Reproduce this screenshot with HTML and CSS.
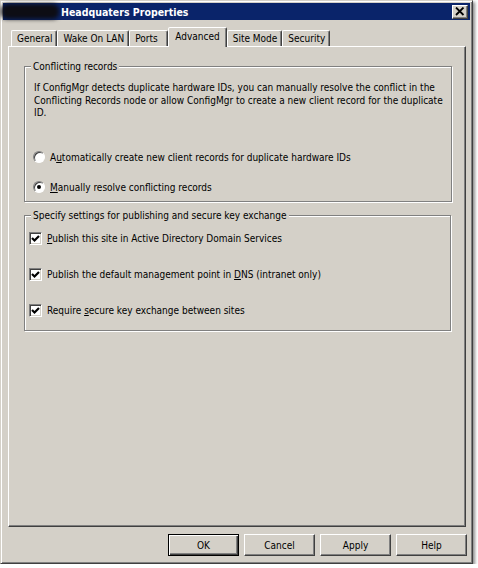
FILE: index.html
```html
<!DOCTYPE html>
<html lang="en">
<head>
    <meta charset="UTF-8">
    <title>Headquaters Properties</title>
    <link rel="stylesheet" href="styles.css">
</head>
<body>

<div class="window">
    <div class="titlebar">
        <span class="title-blur"></span>
        <span class="title">Headquaters Properties</span>
        <button class="close-btn">
            <svg width="10" height="9" viewBox="0 0 10 9">
                <path d="M1 0.5 L8.5 8 M8.5 0.5 L1 8" stroke="#000" stroke-width="1.8"/>
            </svg>
        </button>
    </div>

    <div class="tabs">
        <div class="tab">General</div>
        <div class="tab">Wake On LAN</div>
        <div class="tab">Ports</div>
        <div class="tab active">Advanced</div>
        <div class="tab">Site Mode</div>
        <div class="tab">Security</div>
    </div>

    <div class="panel">
        <fieldset class="group group-conflict">
            <legend>Conflicting records</legend>
            <p class="desc">If ConfigMgr detects duplicate hardware IDs, you can manually resolve the conflict in the<br>Conflicting Records node or allow ConfigMgr to create a new client record for the duplicate<br>ID.</p>

            <div class="option first">
                <span class="radio"></span>
                <span>A<u>u</u>tomatically create new client records for duplicate hardware IDs</span>
            </div>
            <div class="option">
                <span class="radio checked"></span>
                <span><u>M</u>anually resolve conflicting records</span>
            </div>
        </fieldset>

        <fieldset class="group group-publish">
            <legend>Specify settings for publishing and secure key exchange</legend>
            <div class="option check-row first">
                <span class="check"><svg width="9" height="9" viewBox="0 0 9 9"><path d="M1 4 L3.5 6.5 L8 2" stroke="#000" stroke-width="2.2" fill="none"/></svg></span>
                <span><u>P</u>ublish this site in Active Directory Domain Services</span>
            </div>
            <div class="option check-row">
                <span class="check"><svg width="9" height="9" viewBox="0 0 9 9"><path d="M1 4 L3.5 6.5 L8 2" stroke="#000" stroke-width="2.2" fill="none"/></svg></span>
                <span>Publish the default management point in <u>D</u>NS (intranet only)</span>
            </div>
            <div class="option check-row">
                <span class="check"><svg width="9" height="9" viewBox="0 0 9 9"><path d="M1 4 L3.5 6.5 L8 2" stroke="#000" stroke-width="2.2" fill="none"/></svg></span>
                <span>Require <u>s</u>ecure key exchange between sites</span>
            </div>
        </fieldset>
    </div>

    <div class="buttons">
        <button class="btn default">OK</button>
        <button class="btn">Cancel</button>
        <button class="btn">Apply</button>
        <button class="btn">Help</button>
    </div>
</div>

</body>
</html>
```

FILE: styles.css
```css
body {
    margin: 0;
    background-color: #fff;
    font-family: "DejaVu Sans Condensed", "DejaVu Sans", sans-serif;
    font-stretch: condensed;
    font-size: 10px;
    color: #000;
}

.window {
    width: 473px;
    height: 564px;
    box-sizing: border-box;
    background-color: #d4d0c8;
    border: 1px solid;
    border-color: #d4d0c8 #404040 #404040 #d4d0c8;
    box-shadow: inset 1px 1px 0 #fff, inset -1px -1px 0 #808080, 2px 2px 3px rgba(0, 0, 0, 0.45);
    padding: 2px;
    display: flex;
    flex-direction: column;
}

.titlebar {
    height: 17px;
    background-color: #0a246a;
    display: flex;
    align-items: center;
}

.title-blur {
    width: 58px;
    height: 15px;
    margin-left: -2px;
    background-color: #0d0d14;
    border-radius: 6px;
    filter: blur(2px);
}

.title {
    color: #fff;
    font-size: 10.5px;
    font-weight: bold;
    margin-left: 2px;
    flex: 1;
}

.close-btn {
    width: 16px;
    height: 14px;
    margin-right: 2px;
    padding: 0;
    background-color: #d4d0c8;
    border: 1px solid;
    border-color: #fff #404040 #404040 #fff;
    box-shadow: inset -1px -1px 0 #808080;
    display: flex;
    align-items: center;
    justify-content: center;
}

.tabs {
    display: flex;
    align-items: flex-end;
    height: 20px;
    margin: 7px 0 -1px 8px;
    position: relative;
    z-index: 1;
}

.tab {
    min-width: 39px;
    box-sizing: border-box;
    height: 16px;
    line-height: 15px;
    padding: 0 4px 0 5px;
    margin-bottom: 1px;
    border: 1px solid;
    border-bottom: none;
    border-color: #fff #404040 transparent #fff;
    border-radius: 2px 2px 0 0;
    box-shadow: inset -1px 0 0 #808080;
}

.tab.active {
    height: 20px;
    line-height: 17px;
    margin-bottom: 0;
    padding: 0 6px;
    background-color: #d4d0c8;
}

.panel {
    width: 458px;
    height: 481px;
    box-sizing: border-box;
    margin-left: 5px;
    padding: 13px 14px 0 15px;
    border: 1px solid;
    border-color: #fff #404040 #404040 #fff;
    box-shadow: inset -1px -1px 0 #808080;
}

.group {
    margin: 0;
    padding: 0 8px;
    border: 1px solid #808080;
    box-shadow: inset 1px 1px 0 #fff, 1px 1px 0 #fff;
}

.group legend {
    margin-left: -2px;
    padding: 0 2px;
    line-height: 13px;
    background-color: #d4d0c8;
}

.group-conflict {
    padding-bottom: 7px;
}

.group-publish {
    margin-top: 7px;
    padding-bottom: 13px;
}

.desc {
    margin: 9px 0 0 1px;
    line-height: 12.5px;
    white-space: nowrap;
}

.option {
    display: flex;
    align-items: center;
    gap: 5px;
    height: 13px;
    margin-top: 17px;
}

.option.first {
    margin-top: 31px;
}

.check-row {
    margin-top: 23px;
    margin-left: -4px;
}

.check-row.first {
    margin-top: 10px;
}

.radio {
    width: 12px;
    height: 12px;
    box-sizing: border-box;
    border-radius: 50%;
    background-color: #fff;
    border: 1px solid;
    border-color: #808080 #fff #fff #808080;
    box-shadow: inset 1px 1px 0 #404040;
    display: flex;
    align-items: center;
    justify-content: center;
}

.radio.checked::after {
    content: "";
    width: 4px;
    height: 4px;
    border-radius: 50%;
    background-color: #000;
}

.check {
    width: 13px;
    height: 13px;
    box-sizing: border-box;
    background-color: #fff;
    border: 1px solid;
    border-color: #808080 #fff #fff #808080;
    box-shadow: inset 1px 1px 0 #404040, inset -1px -1px 0 #d4d0c8;
    display: flex;
    align-items: center;
    justify-content: center;
}

.buttons {
    display: flex;
    justify-content: flex-end;
    gap: 5px;
    margin-top: 7px;
    padding-right: 3px;
}

.btn {
    width: 71px;
    height: 22px;
    padding: 0;
    font: inherit;
    color: #000;
    background-color: #d4d0c8;
    border: 1px solid;
    border-color: #fff #404040 #404040 #fff;
    box-shadow: inset -1px -1px 0 #808080;
}

.btn.default {
    border: 1px solid #000;
    box-shadow: inset 1px 1px 0 #fff, inset -1px -1px 0 #404040, inset -2px -2px 0 #808080;
}
```
